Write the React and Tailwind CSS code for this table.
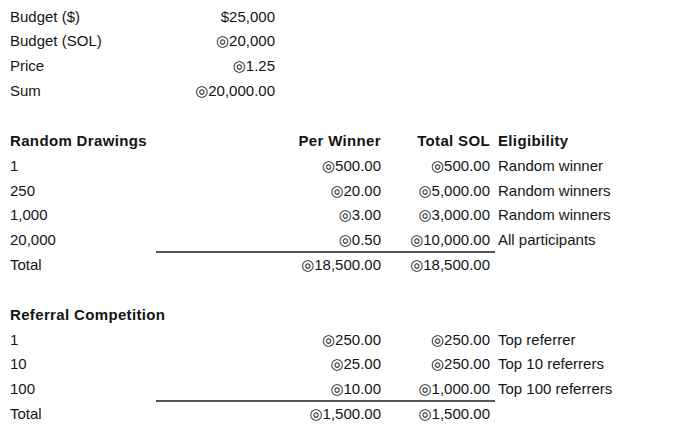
import React from "react";

const S = "◎";

const top = [
  ["Budget ($)", "$25,000"],
  ["Budget (SOL)", S + "20,000"],
  ["Price", S + "1.25"],
  ["Sum", S + "20,000.00"],
];

const draws = [
  ["1", "500.00", "500.00", "Random winner"],
  ["250", "20.00", "5,000.00", "Random winners"],
  ["1,000", "3.00", "3,000.00", "Random winners"],
  ["20,000", "0.50", "10,000.00", "All participants"],
];

const refs = [
  ["1", "250.00", "250.00", "Top referrer"],
  ["10", "25.00", "250.00", "Top 10 referrers"],
  ["100", "10.00", "1,000.00", "Top 100 referrers"],
];

function Section({ title, heads, rows, total }) {
  const cell = "h-[24.85px] leading-[24.85px] whitespace-nowrap";
  const bold = "font-bold tracking-[0.35px]";
  return (
    <div className="grid grid-cols-[146px_225px_114px_1fr]">
      <div className={`${cell} ${bold}`}>{title}</div>
      <div className={`${cell} ${bold} text-right`}>{heads ? "Per Winner" : ""}</div>
      <div className={`${cell} ${bold} text-right pr-[5px]`}>{heads ? "Total SOL" : ""}</div>
      <div className={`${cell} ${bold} pl-[3px]`}>{heads ? "Eligibility" : ""}</div>
      {rows.map((r, i) => {
        const last = i === rows.length - 1;
        const b = last ? "border-b-2 border-[#555555]" : "";
        return (
          <React.Fragment key={i}>
            <div className={cell}>{r[0]}</div>
            <div className={`${cell} text-right ${b}`}>{S + r[1]}</div>
            <div className={`${cell} text-right pr-[5px] ${b}`}>{S + r[2]}</div>
            <div className={`${cell} pl-[3px]`}>{r[3]}</div>
          </React.Fragment>
        );
      })}
      <div className={cell}>Total</div>
      <div className={`${cell} text-right`}>{S + total}</div>
      <div className={`${cell} text-right pr-[5px]`}>{S + total}</div>
      <div className={cell}></div>
    </div>
  );
}

export default function App() {
  return (
    <div
      className="w-[680px] h-[444px] bg-white text-[#141414] text-[15px] pl-[10px] pt-[4.6px] overflow-hidden"
      style={{ fontFamily: '"Liberation Sans", Arial, "DejaVu Sans", sans-serif' }}
    >
      <div className="grid grid-cols-[146px_119px]">
        {top.map((r, i) => (
          <React.Fragment key={i}>
            <div className="h-[24.85px] leading-[24.85px] whitespace-nowrap">{r[0]}</div>
            <div className="h-[24.85px] leading-[24.85px] whitespace-nowrap text-right">{r[1]}</div>
          </React.Fragment>
        ))}
      </div>
      <div className="h-[24.85px]" />
      <Section title="Random Drawings" heads rows={draws} total="18,500.00" />
      <div className="h-[24.85px]" />
      <Section title="Referral Competition" rows={refs} total="1,500.00" />
    </div>
  );
}
